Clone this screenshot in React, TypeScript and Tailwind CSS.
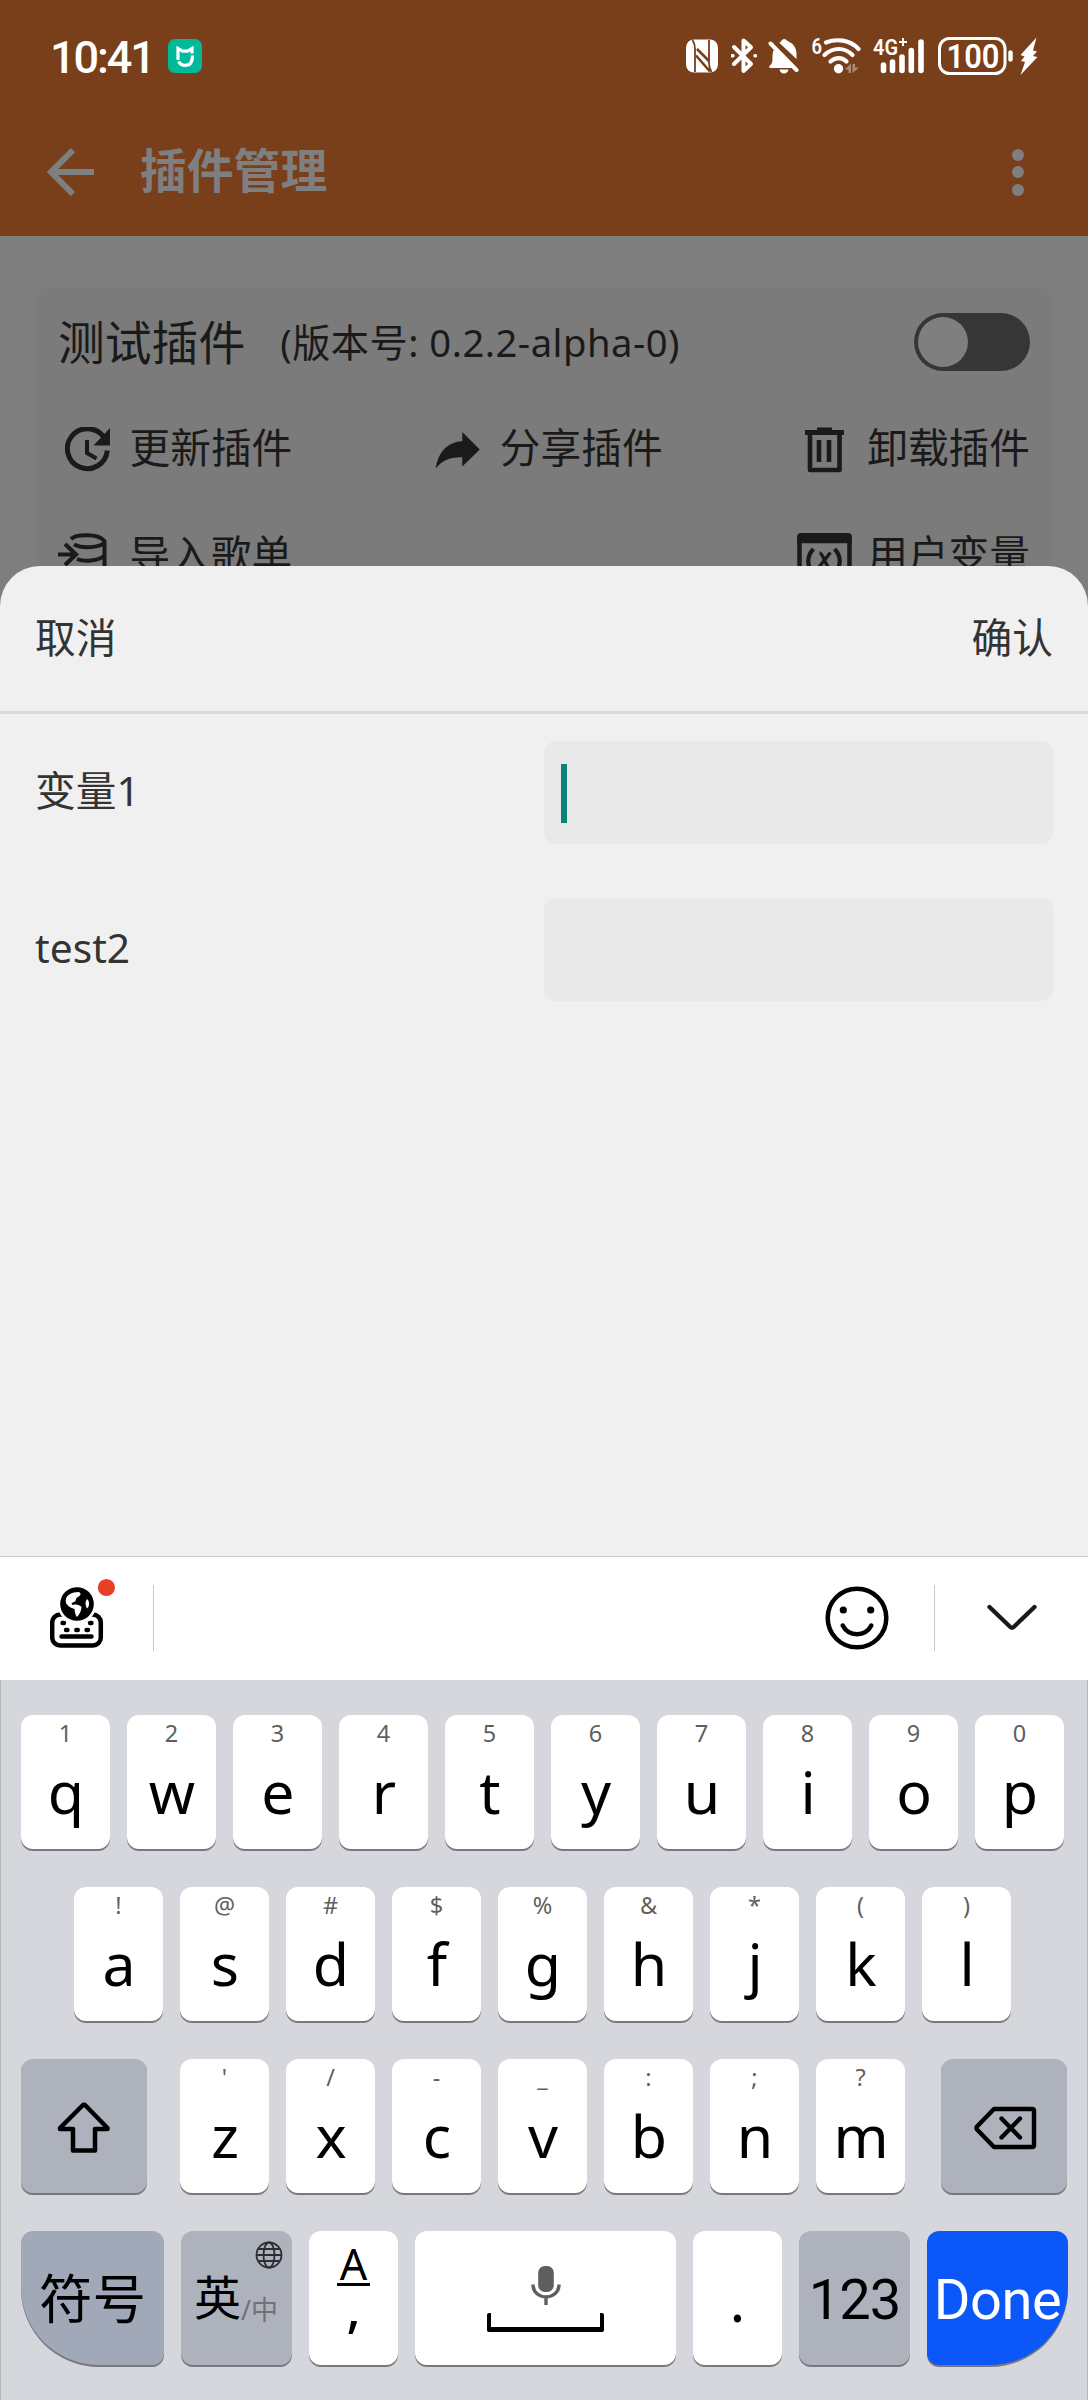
import type { ReactNode } from 'react';

const LATIN = "font-['Noto_Sans','Noto_Sans_CJK_SC',sans-serif]";

function StatusBar() {
  return (
    <div className="flex h-[112px] items-center pl-[50px] pr-[49px] text-white">
      <span className="mt-[3px] w-[118px] whitespace-nowrap font-['Roboto',sans-serif] text-[45px] font-medium leading-[52px] tracking-[-2.1px]">10:41</span>
      <svg className="shrink-0" width="34" height="34" viewBox="0 0 34 34">
        <rect width="34" height="34" rx="7" fill="#00b99a" />
        <path d="M10 21V9.5l4.5 2.7h5L24 9.5v5" fill="none" stroke="#fff" strokeWidth="3.2" />
        <path d="M10.6 22.5c1.5 3 3.6 3.9 6.6 3.9 4.800 0 7.300-3.500 7.300-9.900" fill="none" stroke="#fff" strokeWidth="3.200" />
      </svg>
      <div className="ml-auto flex items-center">
        <svg width="32" height="34" viewBox="686 39 32 34" className="mr-[13px]">
          <rect x="686" y="39.500" width="32" height="33" rx="8" fill="#fff" />
          <path d="M695 72V49q0-5-2.500-9M709 40v23q0 5 2.500 9" stroke="#793e1a" strokeWidth="1.800" fill="none" />
          <path d="M697 49l12 12M696 55.500l14 16" stroke="#793e1a" strokeWidth="2.600" fill="none" />
        </svg>
        <svg width="26" height="36" viewBox="731 38 26 36" className="mr-[11px]" fill="none" stroke="#fff" strokeWidth="4" strokeLinejoin="round" strokeLinecap="round">
          <path d="M734 47l17 17-7.500 7V40.500l7.500 6.800L734 64" />
          <path d="M732 55.700h1M755 55.700h.5" strokeWidth="3.500" />
        </svg>
        <svg width="32" height="36" viewBox="768 38 32 36" className="mr-[11px]">
          <path d="M780 42.500c1-1 2-3.500 4-3.500s3 1.500 4.500 2.500c5 2 8 7 8 12v5.500L779 42.500z" fill="#fff" />
          <path d="M774 49.500L792.500 68H770c-1.500-1-.5-2.500.5-3 2-1.500 2-4.500 2-9 0-2.500.5-4.500 1.500-6.500zM779.500 69.500h9c-.5 2.500-2.300 4-4.500 4s-4-1.500-4.500-4z" fill="#fff" />
          <path d="M770.500 43.500l26 26.500" stroke="#fff" strokeWidth="4" strokeLinecap="round" />
        </svg>
        <svg width="50" height="54" viewBox="810 29 50 54" className="mr-[12px]">
          <text x="810.500" y="54" fontSize="22" fontWeight="600" fill="#fff" fontFamily="Roboto" textLength="10.500" lengthAdjust="spacingAndGlyphs">6</text>
          <g fill="none" stroke="#fff" strokeWidth="4.200" strokeLinecap="round">
            <path d="M825 42.500c10-4 24-3 32.500 6.500" /><path d="M823.500 55c8.500-8 20-8 28 0" /><path d="M829.500 61.500c5-4.500 11.500-4.500 16 0" />
          </g>
          <circle cx="837.500" cy="68.700" r="4.700" fill="#fff" />
          <path d="M844 69.500l6-6v9.500h-2.500v-3.500zM851.500 73v-9h2.500v3.500h4z" fill="#ae8b76" />
        </svg>
        <svg width="52" height="54" viewBox="872 29 52 54" className="mr-[13px]">
          <text x="872" y="55" fontSize="22.500" fontWeight="600" fill="#fff" fontFamily="Roboto" textLength="25" lengthAdjust="spacingAndGlyphs">4G</text>
          <path d="M898 42h8M902 38v8" stroke="#fff" strokeWidth="2" />
          <path d="M882.500 65v5.500M891.500 62v8.500M901 57v13.500M910.300 50.500v20M920 42v28.500" stroke="#fff" strokeWidth="5.600" strokeLinecap="round" />
        </svg>
        <svg width="101" height="54" viewBox="937 29 101 54">
          <rect x="938.500" y="38.500" width="65.500" height="35" rx="10" fill="none" stroke="#fff" strokeWidth="3" />
          <text x="945.500" y="68" fontSize="33" fontWeight="600" fill="#fff" fontFamily="Roboto" textLength="53" lengthAdjust="spacingAndGlyphs">100</text>
          <path d="M1009.500 52.500v7" stroke="#fff" strokeWidth="4.500" strokeLinecap="round" />
          <path d="M1035.500 37.500l-16 17.500 4 1.500-3.500 4.500 4 1-4.500 13 17-18-4.500-1 4-4.500-4-1z" fill="#fff" />
        </svg>
      </div>
    </div>
  );
}

function Header() {
  return (
    <div className="flex h-[120px] items-center pl-[47px] pr-[64px] text-[#7f7f7f]">
      <svg width="48" height="48" viewBox="0 0 48 48" fill="none" stroke="currentColor" strokeWidth="6">
        <path d="M26 2.200L4 24l22 22M4 24h43" />
      </svg>
      <h1 className="mb-[8px] ml-[45px] font-['Noto_Sans_CJK_SC',sans-serif] text-[46.8px] font-bold leading-[60px]">插件管理</h1>
      <div className="ml-auto flex flex-col gap-[5.500px]">
        {[0, 1, 2].map((i) => <i key={i} className="size-3 rounded-full bg-current" />)}
      </div>
    </div>
  );
}

function Action({ icon, label }: { icon: ReactNode; label: string }) {
  return (
    <div className="flex items-center">
      {icon}
      <span className="mb-[6px] whitespace-nowrap text-[40.7px] leading-[56px]">{label}</span>
    </div>
  );
}

function PluginCard() {
  return (
    <div className={`mx-[36px] mt-[52px] h-[340px] rounded-[14px] bg-[#7b7b7b] text-[#1a1a1a] ${LATIN}`}>
      <div className="flex h-[108px] items-center pl-[22px] pr-[22px]">
        <span className="text-[46.8px] leading-[60px]">测试插件</span>
        <span className="ml-[35px] whitespace-nowrap text-[38.200px] leading-[50px] tracking-[0.5px]">(版本号: 0.2.2-alpha-0)</span>
        <div className="ml-auto h-[58px] w-[116px] rounded-full bg-[#363636] p-1">
          <div className="size-[50px] rounded-full bg-[#7f7f7f]" />
        </div>
      </div>
      <div className="flex h-[107px] items-center justify-between pl-[29px] pr-[22px]">
        <Action label="更新插件" icon={
          <svg className="mr-[18.500px]" width="46" height="46" viewBox="65 427 46 46">
            <path d="M104 437.500a20 20 0 1 0 3.300 13" fill="none" stroke="currentColor" strokeWidth="5" />
            <path d="M110 428v17.500H93.500z" fill="currentColor" />
            <path d="M87 440v13l9.500 5.500" fill="none" stroke="currentColor" strokeWidth="4" />
          </svg>} />
        <Action label="分享插件" icon={
          <svg className="mr-[20px]" width="45" height="38" viewBox="434 432 45 38">
            <path d="M434.800 469.500c2-14 9.500-26 26.500-27.500V433l17.500 17.500-17.500 17v-9.300c-12-.5-20 3-26.500 11.300z" fill="currentColor" />
          </svg>} />
        <Action label="卸载插件" icon={
          <svg className="mr-[22px]" width="40" height="46" viewBox="805 427 40 46">
            <path d="M805 430h12v-2.500h15v2.500h12v5h-39z" fill="currentColor" />
            <path d="M810 435v35h29.500v-35M819 440v22M829 440v22" fill="none" stroke="currentColor" strokeWidth="4.600" strokeLinejoin="round" />
          </svg>} />
      </div>
      <div className="flex h-[107px] items-center justify-between pl-[22px] pr-[22px]">
        <Action label="导入歌单" icon={
          <svg className="mr-[21.500px]" width="50" height="52" viewBox="58 533 50 52">
            <path d="M71 541c5-5 27-5.500 33 1.500 4 5-18 10-30 4M104.500 543v33c-8 6-25 6-33 0M104 558c-6 5-20 6-27 3" fill="none" stroke="currentColor" strokeWidth="4" />
            <path d="M58 556.500h17M65 546l11 10.500L65 567" fill="none" stroke="currentColor" strokeWidth="4.200" />
          </svg>} />
        <Action label="用户变量" icon={
          <svg className="mr-[15px]" width="55" height="48" viewBox="797 532 55 48">
            <path d="M799.500 578v-38h50v38" fill="none" stroke="currentColor" strokeWidth="4.500" />
            <path d="M797 542v-6c0-2.500 1.500-4 4-4h47c2.500 0 4 1.500 4 4v6z" fill="currentColor" />
            <path d="M813.500 548c-7 7-7 17 0 24M834.500 548c7 7 7 17 0 24" fill="none" stroke="currentColor" strokeWidth="4.200" />
            <path d="M819.500 552c4 0 6 15 11 15M830.500 551.500l-13 16.500" fill="none" stroke="currentColor" strokeWidth="3.400" />
          </svg>} />
      </div>
    </div>
  );
}

function Sheet() {
  return (
    <div className={`relative -mt-[40px] h-[990px] rounded-t-[40px] bg-[#f0f0f0] text-[40.7px] text-[#333] ${LATIN}`}>
      <div className="flex h-[148px] items-center justify-between border-b-[3px] border-[#d9d9d9] px-[35px] pb-[4px] leading-[56px]">
        <span>取消</span>
        <span>确认</span>
      </div>
      <div className="flex h-[157px] items-center justify-between px-[35px]">
        <span className="mb-[6px] leading-[56px]">变量1</span>
        <div className="flex h-[103px] w-[509px] items-center rounded-[12px] bg-[#e9e9e9] pl-[17px]">
          <i className="mt-[2px] h-[59px] w-[6px] bg-[#0b8376]" />
        </div>
      </div>
      <div className="flex h-[157px] items-center justify-between px-[35px]">
        <span className="mb-[6px] leading-[56px]">test2</span>
        <div className="h-[103px] w-[509px] rounded-[12px] bg-[#e9e9e9]" />
      </div>
    </div>
  );
}

function Toolbar() {
  return (
    <div className="flex h-[124px] items-center border-t border-[#c9c9c9] bg-white pb-[2px]">
      <svg className="ml-[50px] mb-[10px]" width="66" height="70" viewBox="50 1578 66 70">
        <rect x="52.200" y="1614.500" width="48.600" height="31" rx="8" fill="none" stroke="#000" strokeWidth="4.500" />
        <circle cx="77" cy="1604" r="19.500" fill="#fff" />
        <circle cx="77" cy="1604" r="16.800" fill="#000" />
        <path d="M66 1603c-1.500-7 4-11 13-11 3 2 1 4-1 5-3 1-1 4-4 5s-3 2-1 3c3-1 7 0 8.500 2-.5 5-2 7-4.500 10-2-2-2-5-2.500-8-4-1-7-3-8.500-6zM87 1599c3 2 2.500 8 0 9.500-2-3-2-7 0-9.500z" fill="#fff" />
        <path d="M62.500 1623h1.500M90 1623h1.500M66 1630h1.500M76.300 1630h1.500M86.500 1630h1.500M61.500 1636.500h30" stroke="#000" strokeWidth="4.400" strokeLinecap="round" />
        <circle cx="106.400" cy="1587.500" r="8.600" fill="#e64029" />
      </svg>
      <i className="ml-[37px] h-[66px] w-px bg-[#c9c9c9]" />
      <svg className="ml-auto" width="64" height="64" viewBox="-32 -32 64 64" fill="none" stroke="#000" strokeWidth="4.500" strokeLinecap="round">
        <circle r="29.300" />
        <path d="M-14.300 7.500c6 11.500 22.600 11.500 28.600 0" />
        <circle cx="-13.700" cy="-8" r="3.600" fill="#000" stroke="none" />
        <circle cx="13.700" cy="-8" r="3.600" fill="#000" stroke="none" />
      </svg>
      <i className="ml-[45px] h-[66px] w-px bg-[#c9c9c9]" />
      <svg className="ml-[52px] mr-[51px]" width="50" height="28" viewBox="0 0 50 28" fill="none" stroke="#1a1a1a" strokeWidth="4.300" strokeLinecap="round" strokeLinejoin="round">
        <path d="M2.500 3l20.800 20q1.700 1.500 3.400 0L47.500 3" />
      </svg>
    </div>
  );
}

const KEY = 'relative h-[134px] shrink-0 rounded-[12px] shadow-[0_2px_0_#77797c]';

function LetterKey({ ch, hint }: { ch: string; hint: string }) {
  return (
    <div className={`${KEY} flex w-[89px] flex-col items-center bg-white pt-[2px]`}>
      <span className="h-[32px] text-[23.500px] leading-[32px] text-[#5f5f5f]">{hint}</span>
      <span className="mt-[2px] pl-[1px] text-[59px] leading-[80px] text-black">{ch}</span>
    </div>
  );
}

function Letters({ chars, hints }: { chars: string; hints: string }) {
  return <>{chars.split('').map((c, i) => <LetterKey key={c} ch={c} hint={hints[i]} />)}</>;
}

function Keyboard() {
  return (
    <div className={`flex h-[720px] flex-col gap-[38px] border-x border-[#b5b6ba] bg-[#d6d7dc] pt-[35px] ${LATIN}`}>
      <div className="flex gap-[17px] pl-[20px]"><Letters chars="qwertyuiop" hints="1234567890" /></div>
      <div className="flex gap-[17px] pl-[73px]"><Letters chars="asdfghjkl" hints="!@#$%&*()" /></div>
      <div className="flex gap-[17px] pl-[20px]">
        <div className={`${KEY} mr-[16px] flex w-[126px] items-center justify-center bg-[#aeb2bd] pt-[3px]`}>
          <svg width="54" height="54" viewBox="57 2101 54 54" fill="none" stroke="#000" strokeWidth="4.500" strokeLinejoin="round">
            <path d="M82.500 2105.500q1.500-1.500 3 0l22 22.500v1H95v21.500H73V2129H60v-1z" />
          </svg>
        </div>
        <Letters chars="zxcvbnm" hints="'/-_:;?" />
        <div className={`${KEY} ml-[19px] flex w-[126px] items-center justify-center bg-[#aeb2bd] pl-[2px] pt-[4px]`}>
          <svg width="64" height="44" viewBox="973 2106 64 44" fill="none" stroke="#000" strokeWidth="4.400" strokeLinejoin="round" strokeLinecap="round">
            <path d="M994 2109h38q2 0 2 2v34q0 2-2 2h-38l-17-17.500q-1-1.500 0-3z" />
            <path d="M1001.500 2118.500l18.500 19M1020 2118.500l-18.500 19" />
          </svg>
        </div>
      </div>
      <div className="flex gap-[17px] pl-[20px] text-black">
        <div className={`${KEY} flex w-[143px] items-center justify-center rounded-bl-[78px] bg-[#a1a8b8] pt-[1px] text-[53.500px] leading-[70px]`}>符号</div>
        <div className={`${KEY} flex w-[111px] items-start bg-[#aeb2bd] pl-[13px] pt-[31px]`}>
          <span className="text-[47px] leading-[70px]">英</span>
          <span className="mt-[28px] whitespace-nowrap text-[27px] leading-[40px] text-[#707276]">/中</span>
          <svg className="absolute right-[9px] top-[10px]" width="28" height="28" viewBox="-14 -14 28 28" fill="none" stroke="#2d2e31" strokeWidth="1.800">
            <circle r="12.500" /><ellipse rx="5.500" ry="12.500" /><path d="M-12.500 0h25M-10.500-6h21M-10.500 6h21" />
          </svg>
        </div>
        <div className={`${KEY} flex w-[89px] flex-col items-center bg-white`}>
          <span className="mt-[7px] h-[48px] border-b-[3px] border-black px-[3px] text-[43px] leading-[51px]">A</span>
          <span className="mt-[1px] h-[40px] text-[52px] font-medium leading-[40px]">,</span>
        </div>
        <div className={`${KEY} flex w-[261px] flex-col items-center bg-white pt-[35px]`}>
          <svg width="32" height="40" viewBox="-16 0 32 40">
            <rect x="-7.800" y="0" width="15.600" height="26" rx="6.500" fill="#5f5f5f" />
            <path d="M-13 18.500c0 16.500 26 16.500 26 0M0 31v8" fill="none" stroke="#5f5f5f" strokeWidth="3.400" strokeLinecap="butt" />
          </svg>
          <div className="mt-[7px] h-[19px] w-[117px] rounded-[2px] border-x-[4.500px] border-b-[5px] border-black" />
        </div>
        <div className={`${KEY} flex w-[89px] justify-center bg-white pt-[28px] text-[59px] leading-[80px]`}>.</div>
        <div className={`${KEY} flex w-[111px] items-center justify-center bg-[#aeb2bd] pt-[3px] font-['Roboto',sans-serif] text-[56px] leading-[70px] tracking-[-1px]`}>123</div>
        <div className={`${KEY} flex w-[141px] items-center justify-center rounded-br-[78px] bg-[#0b57f7] pt-[3px] font-['Roboto',sans-serif] text-[56px] leading-[70px] tracking-[-0.500px] text-white`}>Done</div>
      </div>
    </div>
  );
}

export default function App() {
  return (
    <div className="h-[2400px] w-[1088px] overflow-hidden bg-[#7e7e7e]">
      <div className="h-[606px] overflow-hidden">
        <div className="h-[236px] bg-[#793e1a]">
          <StatusBar />
          <Header />
        </div>
        <PluginCard />
      </div>
      <Sheet />
      <Toolbar />
      <Keyboard />
    </div>
  );
}
